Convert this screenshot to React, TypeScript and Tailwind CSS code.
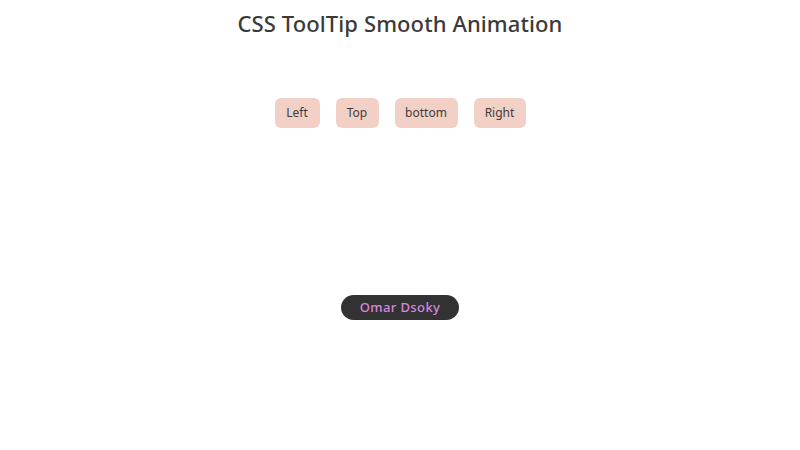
import React from 'react';

const buttons = [
  { label: 'Left', w: 'w-[45px]' },
  { label: 'Top', w: 'w-[43px]' },
  { label: 'bottom', w: 'w-[63px]' },
  { label: 'Right', w: 'w-[52px]' },
];

export default function App() {
  return (
    <div className="w-full h-[450px] bg-white flex flex-col items-center" style={{ fontFamily: '"Noto Sans", Roboto, sans-serif' }}>
      <h1 className="mt-[9px] text-[22px] leading-[28px] font-medium text-[#3a3a3a] tracking-[0.1px]">
        CSS ToolTip Smooth Animation
      </h1>
      <div className="mt-[61px] flex gap-4">
        {buttons.map((b) => (
          <button
            key={b.label}
            className={`${b.w} h-[30px] rounded-md bg-[#f2d0c6] text-[12px] text-[#3d3d3d] flex items-center justify-center`}
          >
            {b.label}
          </button>
        ))}
      </div>
      <div className="mt-[167px] w-[118px] h-[25px] rounded-full bg-[#323232] flex items-center justify-center text-[13px] font-medium text-[#dc86e0] tracking-[0.4px]">
        Omar Dsoky
      </div>
    </div>
  );
}
